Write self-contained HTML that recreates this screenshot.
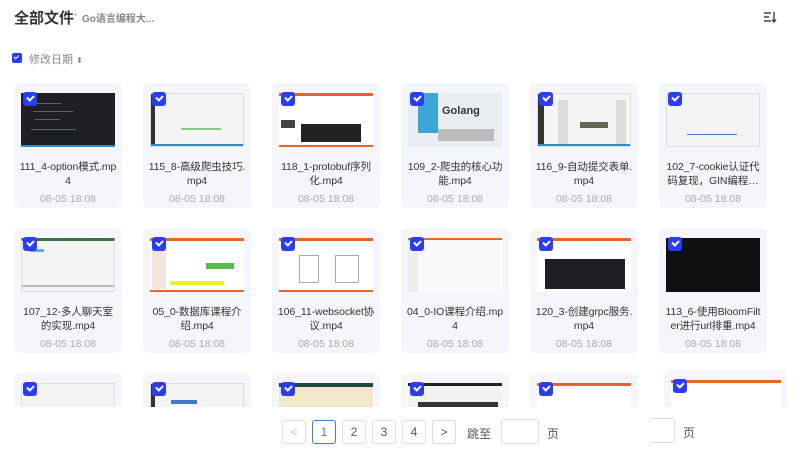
<!DOCTYPE html>
<html><head><meta charset="utf-8"><style>
*{margin:0;padding:0;box-sizing:border-box}
html,body{width:800px;height:454px;overflow:hidden}
body{background:#fff;font-family:"Liberation Sans","Noto Sans CJK SC",sans-serif;position:relative}
.a{position:absolute}
.card{position:absolute;width:108px;height:125px;background:#f5f6fb;border-radius:6px;overflow:hidden}
.r3{height:34px;border-radius:6px 6px 0 0}
.th{position:absolute;left:7px;top:10px;width:94px;height:54px;overflow:hidden;background:#fff}
.ck{position:absolute;left:9px;top:9px;width:14px;height:14px;background:#2b3cf5;border-radius:3px}
.ck:after{content:"";position:absolute;left:4px;top:3px;width:5px;height:3px;border-left:2px solid #fff;border-bottom:2px solid #fff;transform:rotate(-45deg)}
.t{position:absolute;left:4px;right:4px;top:77px;font-size:10.5px;line-height:14px;color:#333;text-align:center;word-break:break-all;letter-spacing:-0.1px}
.n{display:-webkit-box;-webkit-line-clamp:2;-webkit-box-orient:vertical;overflow:hidden}
.d{font-size:10.5px;color:#aaa;text-align:center;margin-top:4px;letter-spacing:0}
.dark{background:#1e1f24}
.dark i{position:absolute;height:1px;background:#5a6a5a}
.lt{background:#f4f4f4;border:1px solid #ddd}
.or{background:#fff;border-top:3px solid #e8652a;border-bottom:2px solid #e8652a}
.pb{position:absolute;top:420px;width:24px;height:24px;border:1px solid #ddd;border-radius:3px;font-size:12px;color:#555;text-align:center;line-height:22px;background:#fff}
</style></head><body>
<div class="a" style="left:14px;top:7px;font-size:15px;font-weight:bold;color:#333">全部文件</div>
<div class="a" style="left:74px;top:13px;width:3px;height:3px;background:#ccc;border-radius:50%"></div>
<div class="a" style="left:82px;top:10px;font-size:10px;color:#888;font-weight:bold">Go语言编程大...</div>
<svg class="a" style="left:763px;top:11px" width="14" height="12" viewBox="0 0 14 12"><path d="M1 2h7M1 6h5M1 10h7M11 1v10M9 8.5l2 2.5 2-2.5" stroke="#444" stroke-width="1.4" fill="none"/></svg>
<div class="a" style="left:12px;top:53px;width:10px;height:10px;background:#2b3cf5;border-radius:2px"></div>
<div class="a" style="left:14px;top:55px;width:5px;height:3px;border-left:1.5px solid #fff;border-bottom:1.5px solid #fff;transform:rotate(-45deg)"></div>
<div class="a" style="left:29px;top:51px;font-size:11px;color:#888">修改日期 <span style="font-size:8px">⬍</span></div>

<!-- row1 -->
<div class="card" style="left:14px;top:83px"><div class="th dark"><i style="left:10px;top:10px;width:30px"></i><i style="left:12px;top:18px;width:40px"></i><i style="left:14px;top:26px;width:25px"></i><i style="left:10px;top:36px;width:45px"></i><div class="a" style="bottom:0;left:0;right:0;height:2px;background:#2a8ad8"></div></div><div class="ck"></div><div class="t"><div class="n">111_4-option模式.mp4</div><div class="d">08-05 18:08</div></div></div>
<div class="card" style="left:143px;top:83px"><div class="th lt"><div class="a" style="left:0;top:0;width:4px;height:54px;background:#333"></div><div class="a" style="left:30px;top:34px;width:40px;height:2px;background:#8c8"></div><div class="a" style="bottom:0;left:0;right:0;height:2px;background:#2a8ad8"></div></div><div class="ck"></div><div class="t"><div class="n">115_8-高级爬虫技巧.mp4</div><div class="d">08-05 18:08</div></div></div>
<div class="card" style="left:272px;top:83px"><div class="th or"><div class="a" style="left:22px;top:28px;width:60px;height:18px;background:#222"></div><div class="a" style="left:2px;top:24px;width:14px;height:8px;background:#444"></div></div><div class="ck"></div><div class="t"><div class="n">118_1-protobuf序列化.mp4</div><div class="d">08-05 18:08</div></div></div>
<div class="card" style="left:401px;top:83px"><div class="th" style="background:#e9eef3"><div class="a" style="left:10px;top:0;width:20px;height:40px;background:#3ba5d8"></div><div class="a" style="left:34px;top:12px;font-size:11px;font-weight:bold;color:#333">Golang</div><div class="a" style="left:30px;top:36px;width:56px;height:12px;background:#bbb"></div></div><div class="ck"></div><div class="t"><div class="n">109_2-爬虫的核心功能.mp4</div><div class="d">08-05 18:08</div></div></div>
<div class="card" style="left:530px;top:83px"><div class="th lt"><div class="a" style="left:0;top:0;width:6px;height:54px;background:#333"></div><div class="a" style="left:42px;top:28px;width:28px;height:6px;background:#665"></div><div class="a" style="left:20px;top:6px;width:10px;height:44px;background:#ddd"></div><div class="a" style="left:78px;top:6px;width:10px;height:44px;background:#ddd"></div><div class="a" style="bottom:0;left:0;right:0;height:2px;background:#2a8ad8"></div></div><div class="ck"></div><div class="t"><div class="n">116_9-自动提交表单.mp4</div><div class="d">08-05 18:08</div></div></div>
<div class="card" style="left:659px;top:83px"><div class="th lt"><div class="a" style="left:20px;top:40px;width:50px;height:1px;background:#47c"></div></div><div class="ck"></div><div class="t"><div class="n">102_7-cookie认证代码复现，GIN编程的经验分享.mp4</div><div class="d">08-05 18:08</div></div></div>

<!-- row2 -->
<div class="card" style="left:14px;top:228px"><div class="th lt" style="border-top:3px solid #3c6e47"><div class="a" style="left:8px;top:8px;width:14px;height:3px;background:#6ad"></div><div class="a" style="left:0;bottom:4px;right:0;height:2px;background:#bbb"></div></div><div class="ck"></div><div class="t"><div class="n">107_12-多人聊天室的实现.mp4</div><div class="d">08-05 18:08</div></div></div>
<div class="card" style="left:143px;top:228px"><div class="th or"><div class="a" style="left:2px;top:4px;width:14px;height:44px;background:#f2e6dc"></div><div class="a" style="left:56px;top:22px;width:28px;height:6px;background:#5b5"></div><div class="a" style="left:20px;top:40px;width:54px;height:4px;background:#ee3"></div></div><div class="ck"></div><div class="t"><div class="n">05_0-数据库课程介绍.mp4</div><div class="d">08-05 18:08</div></div></div>
<div class="card" style="left:272px;top:228px"><div class="th or"><div class="a" style="left:20px;top:14px;width:20px;height:28px;border:1px solid #aaa"></div><div class="a" style="left:56px;top:14px;width:24px;height:28px;border:1px solid #aaa"></div></div><div class="ck"></div><div class="t"><div class="n">106_11-websocket协议.mp4</div><div class="d">08-05 18:08</div></div></div>
<div class="card" style="left:401px;top:228px"><div class="th" style="background:#fafafa;border-top:2px solid #e8652a"><div class="a" style="left:0;top:0;width:10px;height:54px;background:#eee"></div></div><div class="ck"></div><div class="t"><div class="n">04_0-IO课程介绍.mp4</div><div class="d">08-05 18:08</div></div></div>
<div class="card" style="left:530px;top:228px"><div class="th or" style="border-bottom:none"><div class="a" style="left:8px;top:18px;width:80px;height:30px;background:#1e1f24"></div></div><div class="ck"></div><div class="t"><div class="n">120_3-创建grpc服务.mp4</div><div class="d">08-05 18:08</div></div></div>
<div class="card" style="left:659px;top:228px"><div class="th dark" style="background:#111"></div><div class="ck"></div><div class="t"><div class="n">113_6-使用BloomFilter进行url排重.mp4</div><div class="d">08-05 18:08</div></div></div>

<!-- row3 -->
<div class="card r3" style="left:14px;top:373px"><div class="th lt"></div><div class="ck"></div></div>
<div class="card r3" style="left:143px;top:373px"><div class="th lt"><div class="a" style="left:0;top:0;width:4px;height:54px;background:#333"></div><div class="a" style="left:20px;top:16px;width:26px;height:4px;background:#47c"></div></div><div class="ck"></div></div>
<div class="card r3" style="left:272px;top:373px"><div class="th" style="background:#f2e6cc;border-top:4px solid #1e4a40"></div><div class="ck"></div></div>
<div class="card r3" style="left:401px;top:373px"><div class="th" style="background:#f0f2f4;border-top:3px solid #222"><div class="a" style="left:10px;top:16px;width:80px;height:6px;background:#333"></div></div><div class="ck"></div></div>
<div class="card r3" style="left:530px;top:373px"><div class="th or"></div><div class="ck"></div></div>
<div class="card r3" style="left:664px;top:370px;width:123px;height:37px"><div class="th or" style="width:110px"></div><div class="ck"></div></div>

<div class="a" style="left:651px;top:418px;width:24px;height:25px;border:1px solid #ddd;border-left:none;border-radius:0 3px 3px 0"></div>
<div class="a" style="left:683px;top:424px;font-size:12px;color:#555">页</div>
<div class="pb" style="left:282px;color:#bbb">&lt;</div>
<div class="pb" style="left:312px;border-color:#3b7cf5;color:#3b7cf5">1</div>
<div class="pb" style="left:342px">2</div>
<div class="pb" style="left:372px">3</div>
<div class="pb" style="left:402px">4</div>
<div class="pb" style="left:432px">&gt;</div>
<div class="a" style="left:467px;top:425px;font-size:12px;color:#555">跳至</div>
<div class="a" style="left:501px;top:419px;width:38px;height:25px;border:1px solid #ddd;border-radius:3px"></div>
<div class="a" style="left:547px;top:425px;font-size:12px;color:#555">页</div>
</body></html>
